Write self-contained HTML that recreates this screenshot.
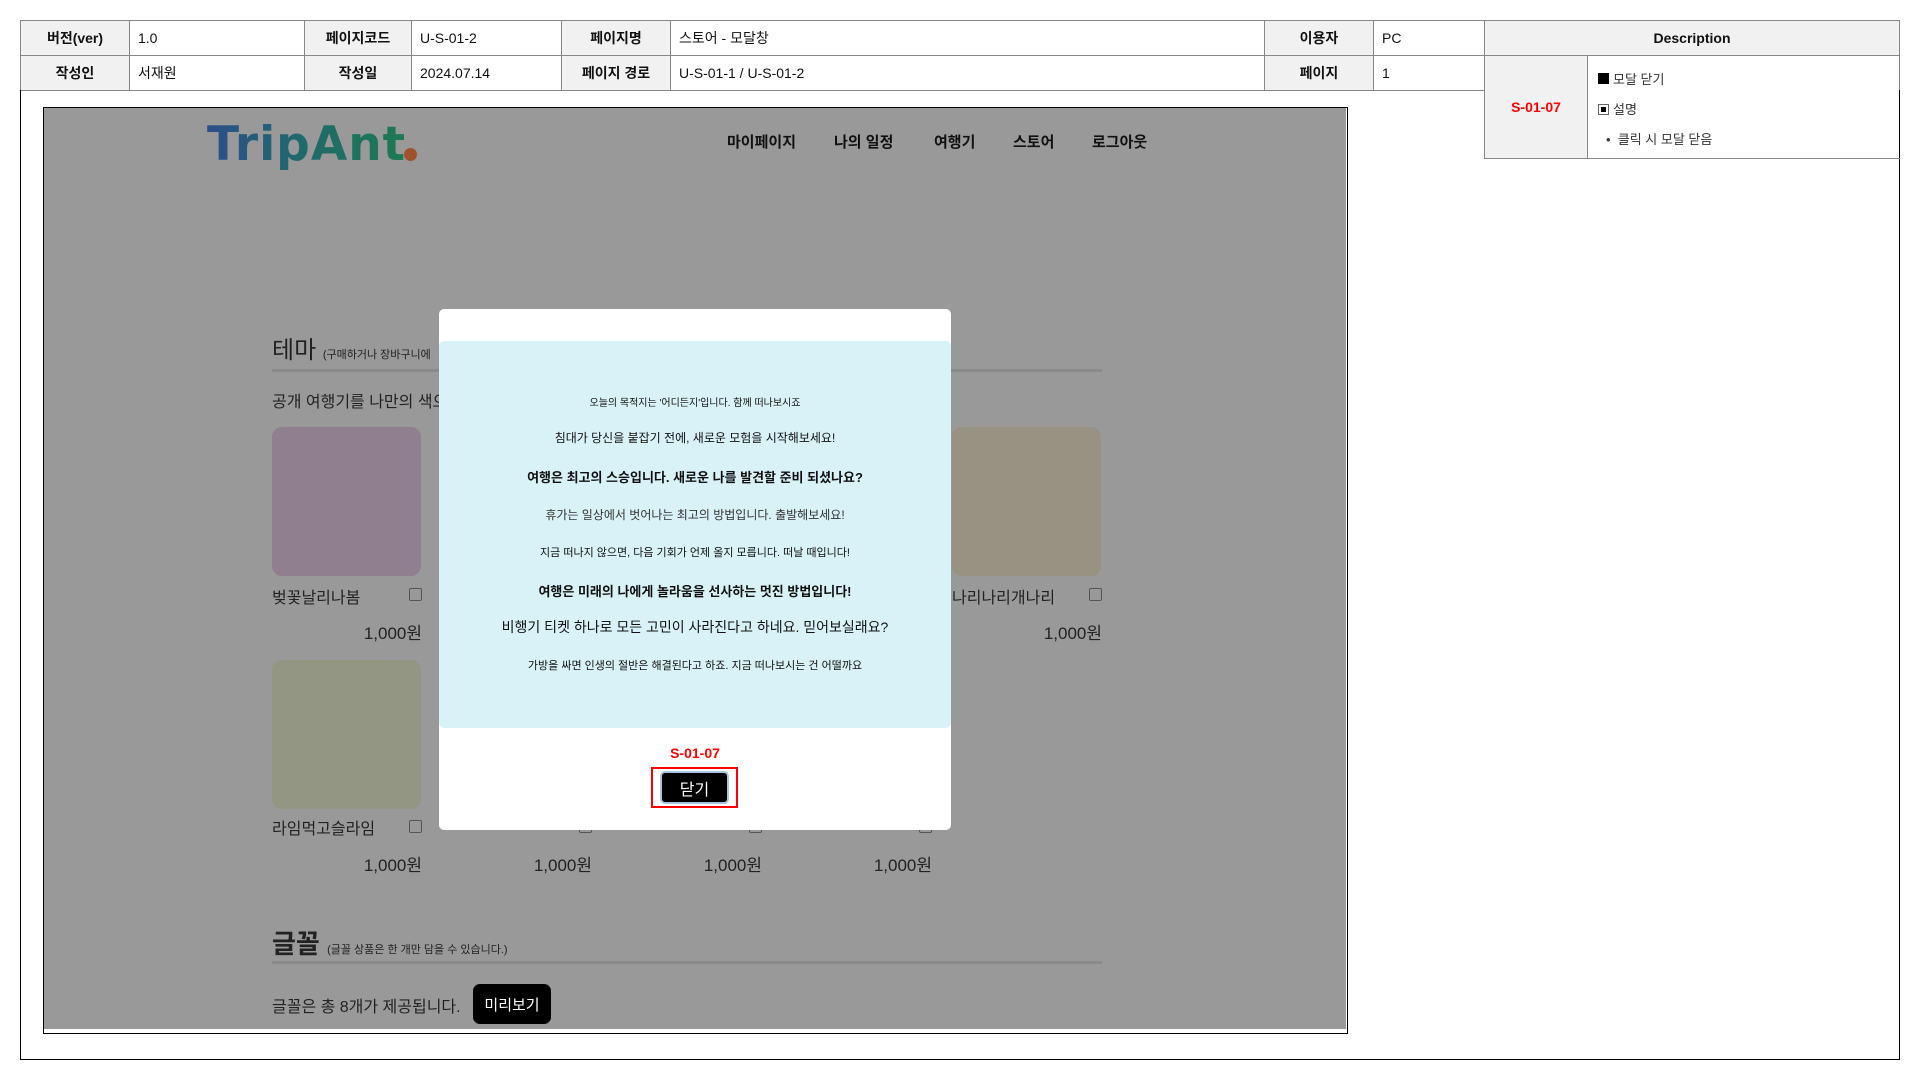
<!DOCTYPE html>
<html><head><meta charset="utf-8"><style>
*{box-sizing:border-box;margin:0;padding:0}
body{width:1920px;height:1080px;background:#fff;position:relative;overflow:hidden;font-family:"Liberation Sans","Noto Sans CJK KR",sans-serif;color:#111}
.a{position:absolute}
.c{position:absolute;border:1px solid #888;display:flex;align-items:center;font-size:14px;padding-left:8px}
.h{background:#f1f1f1;font-weight:bold;justify-content:center;padding-left:0}
.card{position:absolute;width:149px;height:149px;border-radius:10px}
.lbl{position:absolute;font-size:16px;color:#222}
.cb{position:absolute;width:13px;height:13px;border:1px solid #555;border-radius:2px}
.pr{position:absolute;font-size:17px;color:#222;text-align:right;width:120px}
.m{position:absolute;left:0;width:512px;text-align:center;font-size:12px;color:#111}
</style></head><body>
<div class="c h" style="left:20px;top:20px;width:110px;height:36px">버전(ver)</div>
<div class="c" style="left:129px;top:20px;width:176px;height:36px">1.0</div>
<div class="c h" style="left:304px;top:20px;width:108px;height:36px">페이지코드</div>
<div class="c" style="left:411px;top:20px;width:151px;height:36px">U-S-01-2</div>
<div class="c h" style="left:561px;top:20px;width:110px;height:36px">페이지명</div>
<div class="c" style="left:670px;top:20px;width:595px;height:36px">스토어 - 모달창</div>
<div class="c h" style="left:1264px;top:20px;width:110px;height:36px">이용자</div>
<div class="c" style="left:1373px;top:20px;width:112px;height:36px">PC</div>
<div class="c h" style="left:20px;top:55px;width:110px;height:36px">작성인</div>
<div class="c" style="left:129px;top:55px;width:176px;height:36px">서재원</div>
<div class="c h" style="left:304px;top:55px;width:108px;height:36px">작성일</div>
<div class="c" style="left:411px;top:55px;width:151px;height:36px">2024.07.14</div>
<div class="c h" style="left:561px;top:55px;width:110px;height:36px">페이지 경로</div>
<div class="c" style="left:670px;top:55px;width:595px;height:36px">U-S-01-1 / U-S-01-2</div>
<div class="c h" style="left:1264px;top:55px;width:110px;height:36px">페이지</div>
<div class="c" style="left:1373px;top:55px;width:112px;height:36px">1</div>
<div class="c h" style="left:1484px;top:20px;width:416px;height:36px">Description</div>
<div class="c h" style="left:1484px;top:55px;width:104px;height:104px;color:#f00">S-01-07</div>
<div class="c" style="left:1587px;top:55px;width:313px;height:104px;display:block;padding:9px 0 0 10px;font-size:13px;color:#333;line-height:30px">
<div><span style="display:inline-block;width:11px;height:11px;background:#000;margin-right:4px"></span>모달 닫기</div>
<div><span style="display:inline-block;width:11px;height:11px;border:1px solid #666;margin-right:4px;position:relative;vertical-align:-1px"><span style="position:absolute;left:2px;top:2px;width:5px;height:5px;background:#000"></span></span>설명</div>
<div style="padding-left:8px">• &nbsp;클릭 시 모달 닫음</div>
</div>
<div class="a" style="left:20px;top:90px;width:1880px;height:970px;border:1px solid #000;border-top:none"></div>
<div class="a" style="left:1484px;top:158px;width:416px;height:1px;background:#888"></div>
<div class="a" style="left:43px;top:107px;width:1305px;height:927px;border:1.5px solid #000;background:#fff">
<div class="a" style="left:0;top:0;width:1302px;height:921px;background:#999"></div>
</div>
<div class="a" style="left:207px;top:117px;font-size:47px;font-weight:bold;letter-spacing:1px;font-family:'DejaVu Sans',sans-serif;background:linear-gradient(90deg,#2c4f8a,#1f6a6a 50%,#1e7a52);-webkit-background-clip:text;color:transparent">TripAnt</div>
<div class="a" style="left:404px;top:148px;width:13px;height:13px;border-radius:50%;background:#a0522d"></div>
<div class="a" style="top:131px;left:727px;font-size:15px;font-weight:bold;color:#111">마이페이지</div>
<div class="a" style="top:131px;left:834px;font-size:15px;font-weight:bold;color:#111">나의 일정</div>
<div class="a" style="top:131px;left:934px;font-size:15px;font-weight:bold;color:#111">여행기</div>
<div class="a" style="top:131px;left:1013px;font-size:15px;font-weight:bold;color:#111">스토어</div>
<div class="a" style="top:131px;left:1092px;font-size:15px;font-weight:bold;color:#111">로그아웃</div>
<div class="a" style="left:272px;top:330px;font-size:24px;color:#222">테마 <span style="font-size:11px">(구매하거나 장바구니에</span></div>
<div class="a" style="left:272px;top:369px;width:830px;height:3px;background:#8a8a8a"></div>
<div class="a" style="left:272px;top:388px;font-size:16px;color:#222">공개 여행기를 나만의 색으로</div>
<div class="card" style="left:272px;top:427px;background:#8f7f8f"></div>
<div class="card" style="left:952px;top:427px;background:#979282"></div>
<div class="lbl" style="left:272px;top:584px">벚꽃날리나봄</div>
<div class="cb" style="left:409px;top:588px"></div>
<div class="pr" style="left:302px;top:619px">1,000원</div>
<div class="lbl" style="left:952px;top:584px">나리나리개나리</div>
<div class="cb" style="left:1089px;top:588px"></div>
<div class="pr" style="left:982px;top:619px">1,000원</div>
<div class="card" style="left:272px;top:660px;background:#939683"></div>
<div class="lbl" style="left:272px;top:815px">라임먹고슬라임</div>
<div class="cb" style="left:409px;top:820px"></div>
<div class="cb" style="left:579px;top:820px"></div>
<div class="cb" style="left:749px;top:820px"></div>
<div class="cb" style="left:919px;top:820px"></div>
<div class="pr" style="left:302px;top:851px">1,000원</div>
<div class="pr" style="left:472px;top:851px">1,000원</div>
<div class="pr" style="left:642px;top:851px">1,000원</div>
<div class="pr" style="left:812px;top:851px">1,000원</div>
<div class="a" style="left:272px;top:924px;font-size:26px;font-weight:bold;color:#222">글꼴 <span style="font-size:11px;font-weight:normal">(글꼴 상품은 한 개만 담을 수 있습니다.)</span></div>
<div class="a" style="left:272px;top:961px;width:830px;height:3px;background:#8a8a8a"></div>
<div class="a" style="left:272px;top:993px;font-size:16px;color:#222">글꼴은 총 8개가 제공됩니다.</div>
<div class="a" style="left:473px;top:984px;width:78px;height:40px;border-radius:7px;background:#000;color:#fff;font-size:15px;display:flex;align-items:center;justify-content:center">미리보기</div>
<div class="a" style="left:439px;top:309px;width:512px;height:521px;background:#fff;border-radius:5px">
<div class="a" style="left:0;top:32px;width:512px;height:387px;background:#d9f2f7;border-radius:5px"></div>
<div class="m" style="top:85px;font-size:10px">오늘의 목적지는 '어디든지'입니다. 함께 떠나보시죠</div>
<div class="m" style="top:120px;font-size:12px">침대가 당신을 붙잡기 전에, 새로운 모험을 시작해보세요!</div>
<div class="m" style="top:158px;font-size:13px;font-weight:bold">여행은 최고의 스승입니다. 새로운 나를 발견할 준비 되셨나요?</div>
<div class="m" style="top:197px;font-size:12px;color:#333">휴가는 일상에서 벗어나는 최고의 방법입니다. 출발해보세요!</div>
<div class="m" style="top:235px;font-size:11px">지금 떠나지 않으면, 다음 기회가 언제 올지 모릅니다. 떠날 때입니다!</div>
<div class="m" style="top:272px;font-size:13px;font-weight:bold">여행은 미래의 나에게 놀라움을 선사하는 멋진 방법입니다!</div>
<div class="m" style="top:308px;font-size:14px">비행기 티켓 하나로 모든 고민이 사라진다고 하네요. 믿어보실래요?</div>
<div class="m" style="top:348px;font-size:11px">가방을 싸면 인생의 절반은 해결된다고 하죠. 지금 떠나보시는 건 어떨까요</div>
<div class="m" style="top:436px;font-size:14px;font-weight:bold;color:#f00">S-01-07</div>
<div class="a" style="left:212px;top:458px;width:87px;height:41px;border:2px solid #f00"></div>
<div class="a" style="left:221px;top:462px;width:69px;height:33px;background:#000;border:2px solid #a8c4e0;border-radius:5px;color:#fff;font-size:16px;display:flex;align-items:center;justify-content:center">닫기</div>
</div>
</body></html>
